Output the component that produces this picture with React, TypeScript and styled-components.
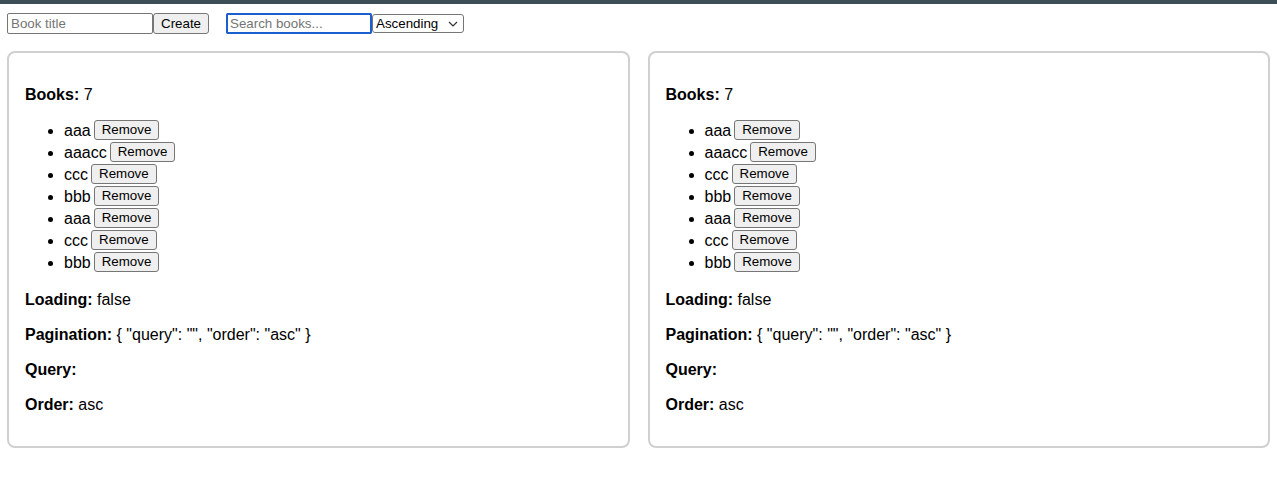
import React from "react";
import styled, { createGlobalStyle } from "styled-components";

const Global = createGlobalStyle`
  body {
    margin: 0;
    background: #ffffff;
    font-family: "Liberation Sans", Arial, sans-serif;
    color: #000;
  }
`;

const TopBar = styled.div`
  height: 4px;
  background: #3e4e59;
`;

const Page = styled.div`
  padding: 9px 7px 0 7px;
`;

const Toolbar = styled.div`
  display: flex;
  align-items: center;
  gap: 17px;
  height: 21px;
`;

const Group = styled.div`
  display: flex;
  align-items: center;
`;

const TextInput = styled.input<{ $focused?: boolean }>`
  box-sizing: border-box;
  width: 146px;
  height: 21px;
  margin: 0;
  padding: 1px 3px;
  font-family: "Liberation Sans", Arial, sans-serif;
  font-size: 13.33px;
  border: 1px solid #767676;
  border-radius: 2px;
  outline: ${(p) => (p.$focused ? "2px solid #1a5fd0" : "none")};
  outline-offset: -2px;
  background: #fff;
  &::placeholder {
    color: #757575;
  }
`;

const Button = styled.button`
  box-sizing: border-box;
  height: 21px;
  margin: 0;
  padding: 0 7px;
  font-family: "Liberation Sans", Arial, sans-serif;
  font-size: 13.33px;
  color: #000;
  background: #efefef;
  border: 1px solid #767676;
  border-radius: 3px;
`;

const SelectBox = styled.div`
  box-sizing: border-box;
  width: 92px;
  height: 19px;
  border: 1px solid #767676;
  border-radius: 3px;
  background: #fff;
  font-size: 13.33px;
  display: flex;
  align-items: center;
  justify-content: space-between;
  padding: 0 5px 0 3px;
`;

const Columns = styled.div`
  display: grid;
  grid-template-columns: 1fr 1fr;
  gap: 18px;
  margin-top: 17px;
`;

const Panel = styled.div`
  box-sizing: border-box;
  border: 2px solid #d0d0d0;
  border-radius: 8px;
  padding: 16px;
`;

const Line = styled.p`
  margin: 16px 0;
  font-size: 16px;
  line-height: 19px;
`;

const Label = styled.b`
  font-weight: bold;
`;

const List = styled.ul`
  margin: 16px 0;
  padding-left: 39px;
`;

const Item = styled.li`
  height: 22px;
  line-height: 22px;
  font-size: 16px;
`;

const RemoveButton = styled(Button)`
  height: 20px;
  vertical-align: middle;
  margin-left: 3px;
  position: relative;
  top: -2px;
`;

const books = ["aaa", "aaacc", "ccc", "bbb", "aaa", "ccc", "bbb"];

function BookPanel() {
  return (
    <Panel>
      <Line>
        <Label>Books:</Label> 7
      </Line>
      <List>
        {books.map((b, i) => (
          <Item key={i}>
            {b}
            <RemoveButton>Remove</RemoveButton>
          </Item>
        ))}
      </List>
      <Line>
        <Label>Loading:</Label> false
      </Line>
      <Line>
        <Label>Pagination:</Label> {'{ "query": "", "order": "asc" }'}
      </Line>
      <Line>
        <Label>Query:</Label>
      </Line>
      <Line>
        <Label>Order:</Label> asc
      </Line>
    </Panel>
  );
}

export default function App() {
  return (
    <>
      <Global />
      <TopBar />
      <Page>
        <Toolbar>
          <Group>
            <TextInput placeholder="Book title" />
            <Button>Create</Button>
          </Group>
          <Group>
            <TextInput placeholder="Search books..." $focused />
            <SelectBox>
              <span>Ascending</span>
              <svg width="10" height="6" viewBox="0 0 10 6">
                <path d="M1 1 L5 5 L9 1" fill="none" stroke="#333" strokeWidth="1.2" />
              </svg>
            </SelectBox>
          </Group>
        </Toolbar>
        <Columns>
          <BookPanel />
          <BookPanel />
        </Columns>
      </Page>
    </>
  );
}
